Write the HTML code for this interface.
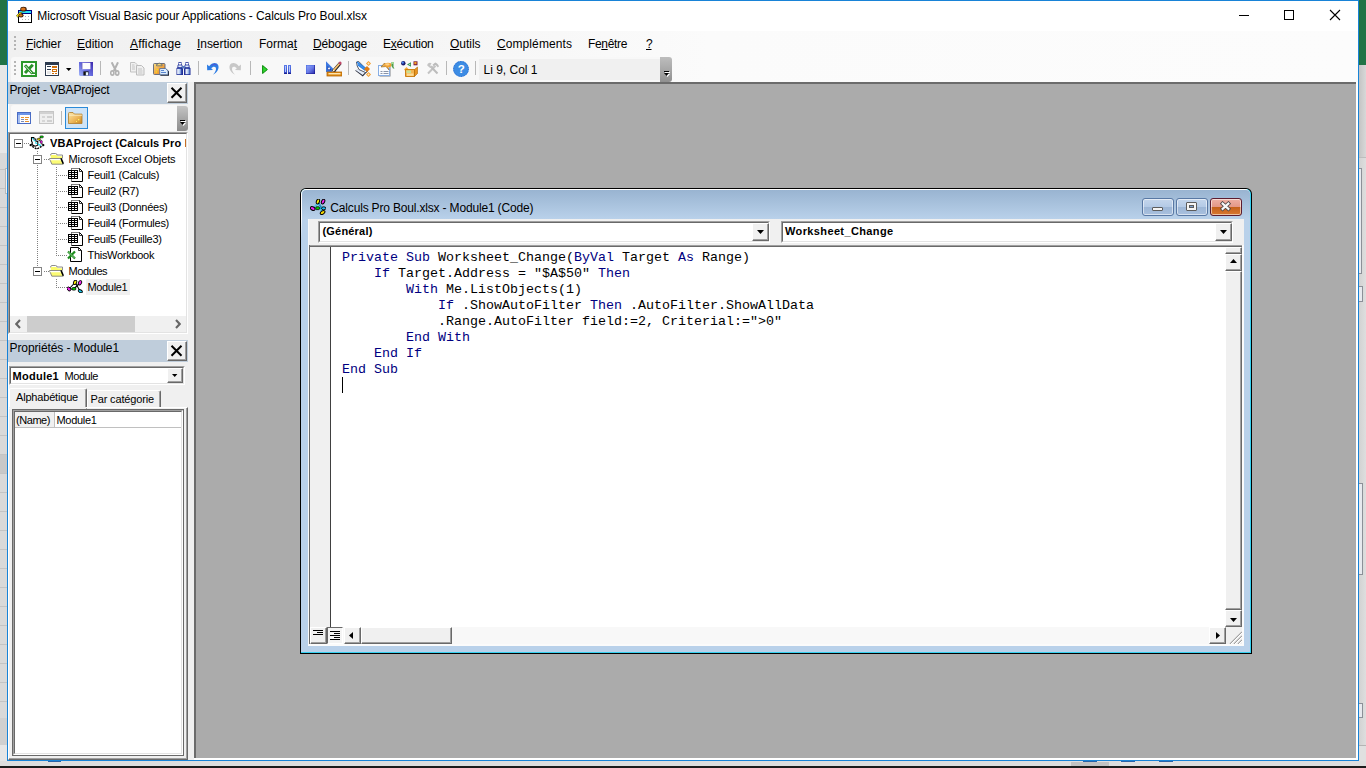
<!DOCTYPE html>
<html lang="fr">
<head>
<meta charset="utf-8">
<title>Microsoft Visual Basic pour Applications - Calculs Pro Boul.xlsx</title>
<style>
html,body{margin:0;padding:0;}
body{width:1366px;height:768px;overflow:hidden;position:relative;background:#e6e6e6;font-family:"Liberation Sans",sans-serif;font-size:12px;color:#000;}
body div,body span,body svg{position:absolute;box-sizing:border-box;}
.t{white-space:nowrap;line-height:16px;height:16px;transform-origin:0 50%;}
.t u{text-decoration:underline;text-underline-offset:1px;text-decoration-thickness:1px;position:static;}
.ui{font-size:12px;}
.th{font-size:11px;}
.b{font-weight:bold;}
/* desktop behind */
#bgL{left:0;top:0;width:7px;height:65px;background:#217346;}
#bgL2{left:0;top:65px;width:7px;height:696px;background:#e7e7e7;}
#bgR{left:1359px;top:0;width:7px;height:65px;background:#217346;}
#bgR2{left:1359px;top:65px;width:7px;height:696px;background:linear-gradient(to right,#c4c4c4,#d8d8d8);}
#bgB{left:0;top:761px;width:1366px;height:5px;background:#dedede;}
#task{left:0;top:766px;width:1366px;height:2px;background:#1c1c1c;}
/* main window */
#win{left:7px;top:0;width:1352px;height:761px;background:#f0f0f0;border:1px solid #1883d7;}
#title{left:8px;top:1px;width:1350px;height:30px;background:#fff;}
#menubar{left:8px;top:31px;width:1350px;height:26px;background:linear-gradient(to right,#f0f0f0 0,#f3f3f3 300px,#fbfbfb 700px,#fcfcfc 100%);}
#toolbar{left:8px;top:57px;width:1350px;height:25px;background:linear-gradient(to right,#f0f0f0 0,#f3f3f3 300px,#fbfbfb 700px,#fcfcfc 100%);}
#tbin{left:11px;top:57px;width:650px;height:25px;background:#f8f8f8;border-radius:3px 0 0 3px;}
#mdi{left:194px;top:82px;width:1162px;height:676px;background:#ababab;border-left:2px solid #6b6b6b;border-top:2px solid #6b6b6b;}
.sep{width:1px;background:#b8b8b8;}
.grip i{position:absolute;left:0;width:2px;height:2px;background:#b4b4b4;}
.btn3d{background:#f0f0f0;border:1px solid;border-color:#fff #696969 #696969 #fff;box-shadow:inset -1px -1px 0 #a0a0a0;}
.hd{height:1px;background:repeating-linear-gradient(to right,#808080 0,#808080 1px,transparent 1px,transparent 2px);}
.vd{width:1px;background:repeating-linear-gradient(to bottom,#808080 0,#808080 1px,transparent 1px,transparent 2px);}
.xb{width:9px;height:9px;background:#fff;border:1px solid #848484;}
.xb i{position:absolute;left:1px;top:3px;width:5px;height:1px;background:#000;}
.mono{font-family:"Liberation Mono",monospace;font-size:13.333px;white-space:pre;color:#000;}
.mono b{font-weight:normal;color:#000080;position:static;}
.cb{width:32px;height:18px;border:1px solid #5878a4;border-radius:3px;background:linear-gradient(#c4d6ec 0,#b4cae6 48%,#9cb6d6 50%,#a8c0de 100%);box-shadow:inset 0 0 0 1px rgba(255,255,255,.55);}
.cbx{border-color:#5c1c30;background:linear-gradient(#eeb0a4 0,#e49888 48%,#c4601c 50%,#d87830 100%);}
.sb{background:#e6e9ee;border:1px solid #8c9098;border-left:0;}
</style>
</head>
<body>
<div id="bgL"></div><div id="bgL2"></div>
<div id="bgR"></div><div id="bgR2"></div>
<div style="left:0;top:153px;width:7px;height:608px;background:repeating-linear-gradient(to bottom,#d9d9d9 0,#d9d9d9 18px,#c4c4c4 18px,#c4c4c4 19px);background-position:0 -2px"></div>
<div style="left:0;top:455px;width:7px;height:18px;background:#c8c8c8"></div>
<div style="left:0;top:718px;width:7px;height:27px;background:#d0d0d0"></div>
<div style="left:0;top:745px;width:7px;height:16px;background:#e6e6e6"></div>
<div style="left:5px;top:168px;width:2px;height:26px;background:#f2f2f2;border:1px solid #b8b8b8;border-right:0"></div>
<div style="left:1359px;top:157px;width:7px;height:1px;background:#bdbdbd"></div>
<div style="left:1359px;top:158px;width:7px;height:587px;background:linear-gradient(to right,#d2d2d2,#dedede)"></div>
<div style="left:1359px;top:745px;width:7px;height:1px;background:#b4b4b4"></div>
<div style="left:1359px;top:746px;width:7px;height:15px;background:#e0e0e0"></div>
<div class="sb" style="left:1359px;top:168px;width:3px;height:106px"></div>
<div class="sb" style="left:1359px;top:286px;width:4px;height:16px"></div>
<div class="sb" style="left:1359px;top:483px;width:4px;height:92px"></div>
<div class="sb" style="left:1359px;top:703px;width:4px;height:15px"></div>
<div id="bgB"></div>
<div style="left:48px;top:761px;width:13px;height:1px;background:#2a64a8"></div>
<div style="left:1083px;top:761px;width:14px;height:1px;background:#2a64a8"></div>
<div style="left:1121px;top:761px;width:14px;height:1px;background:#2a64a8"></div>
<div style="left:1159px;top:761px;width:14px;height:1px;background:#2a64a8"></div>

<div id="task"></div>
<div style="left:1071px;top:762px;width:38px;height:4px;background:#c2c2c2"></div>
<div id="win"></div>
<div id="title"></div>
<div id="menubar"></div>
<div id="toolbar"></div>
<div id="tbin"></div>
<div id="mdi"></div>
<div style="left:1356px;top:82px;width:2px;height:678px;background:#fff"></div>
<div style="left:194px;top:758px;width:1164px;height:2px;background:#fff"></div>
<div style="left:8px;top:104px;width:1px;height:656px;background:#fff"></div>
<svg width="0" height="0" style="left:0;top:0"><defs>
<g id="ifold"><path d="M1.500 2.500q0-2 1.500-2h3.500q1.500 0 1.500 1.500h5.500v3.500" fill="#fff" stroke="#808080" stroke-width=".9"/><path d="M1.800 2h6l.5 1.200h4.700v2h-11.200z" fill="#fbfb6c"/><path d="M.5 5.500h11.300l2.400 5.700h-11.400z" fill="#fbfb74" stroke="#808080" stroke-width=".9"/><path d="M.9 5.900h10.600l.6 1.400h-10.700z" fill="#fff"/><path d="M12 5.300l2.300 5.500" stroke="#000" stroke-width="1.600"/></g>
<g id="isheet"><path d="M3.500 .5h8l3 3v10h-11z" fill="#fff" stroke="#000" stroke-width="1"/><path d="M3.500 13.500v-13h8" fill="none" stroke="#808080" stroke-width="1"/><path d="M11.500 .5v3h3" fill="none" stroke="#000" stroke-width=".8"/><rect x="0" y="2" width="10" height="9" fill="#000"/><g fill="#fff"><rect x="1" y="3" width="2" height="1"/><rect x="4" y="3" width="2" height="1"/><rect x="7" y="3" width="2" height="1"/><rect x="1" y="5" width="2" height="1"/><rect x="4" y="5" width="2" height="1"/><rect x="7" y="5" width="2" height="1"/><rect x="1" y="7" width="2" height="1"/><rect x="4" y="7" width="2" height="1"/><rect x="7" y="7" width="2" height="1"/><rect x="1" y="9" width="2" height="1"/><rect x="4" y="9" width="2" height="1"/><rect x="7" y="9" width="2" height="1"/></g></g>
<g id="imod"><path d="M2 9L8 2.500M8.500 3L13 11M6.800 9L12.800 3M3 9h4" stroke="#000" stroke-width="1.100" fill="none"/><ellipse cx="8.100" cy="2.400" rx="1.500" ry="2.300" transform="rotate(25 8.100 2.400)" fill="#f4ec00" stroke="#000" stroke-width=".9"/><ellipse cx="13" cy="2.800" rx="1.500" ry="2.300" transform="rotate(25 13 2.800)" fill="#f024f0" stroke="#000" stroke-width=".9"/><ellipse cx="1.900" cy="9" rx="1.600" ry="2.200" transform="rotate(-40 1.900 9)" fill="#f024f0" stroke="#000" stroke-width=".9"/><rect x="5" y="7.600" width="3.800" height="2.500" rx=".9" fill="#00d400" stroke="#000" stroke-width=".8"/><ellipse cx="13.300" cy="11.200" rx="2.200" ry="1.400" transform="rotate(30 13.300 11.200)" fill="#20d0f0" stroke="#000" stroke-width=".9"/></g>
<g id="imod16"><path d="M3.500 9L7.500 4.500M9 4.500L12.500 9M8.500 5L12 13M7 9.300h6" stroke="#08c0e0" stroke-width="1.400" stroke-dasharray="1.100 .500" fill="none"/><path d="M9.200 4.200L11.600 10.500" stroke="#1c50a8" stroke-width="1.100" stroke-dasharray="1 .7"/><ellipse cx="7.900" cy="2.500" rx="1.500" ry="2.500" transform="rotate(20 7.900 2.500)" fill="#f4ec00" stroke="#000" stroke-width="1"/><ellipse cx="13.100" cy="2.600" rx="1.500" ry="2.500" transform="rotate(25 13.100 2.600)" fill="#f024f0" stroke="#000" stroke-width="1"/><ellipse cx="2.700" cy="9.500" rx="2.500" ry="1.700" transform="rotate(30 2.700 9.500)" fill="#f024f0" stroke="#000" stroke-width="1"/><rect x="5.800" y="7.800" width="3.600" height="2.800" rx=".7" fill="#00d400" stroke="#000" stroke-width=".8"/><ellipse cx="13.700" cy="9.300" rx="2.200" ry="1.500" fill="#20b8f0" stroke="#000" stroke-width=".9"/><ellipse cx="12.600" cy="13.500" rx="2.600" ry="1.600" transform="rotate(-35 12.600 13.500)" fill="#f4d800" stroke="#000" stroke-width="1"/></g>
</defs></svg>
<svg id="appico" style="left:16px;top:6px" width="18" height="18" viewBox="0 0 18 18" shape-rendering="crispEdges">
<rect x="2.5" y="4.5" width="13" height="12" fill="#fff" stroke="#000"/>
<rect x="2" y="4" width="14" height="4" fill="#000080"/>
<rect x="3" y="5" width="12" height="2" fill="#22e0f0"/>
<g fill="#b0b0b0"><rect x="9" y="10" width="1" height="1"/><rect x="12" y="10" width="1" height="1"/><rect x="6" y="13" width="1" height="1"/><rect x="9" y="13" width="1" height="1"/><rect x="12" y="13" width="1" height="1"/></g>
<g shape-rendering="auto"><ellipse cx="7.5" cy="3.2" rx="3.2" ry="2.4" fill="#3a1c08"/><ellipse cx="7.3" cy="3" rx="2.3" ry="1.6" fill="#d8741c"/>
<path d="M0.300 9.800 L3.800 6.200 L6.300 6.800 L1.800 11.200Z" fill="#fff000" stroke="#222" stroke-width=".5"/>
<ellipse cx="5" cy="9.5" rx="2.6" ry="1.9" fill="#3a1c08"/><ellipse cx="4.8" cy="9.4" rx="1.8" ry="1.1" fill="#d8741c"/></g>
</svg>
<span class="t " style="left:37.3px;top:8px;font-size:12px;letter-spacing:-0.090px;">Microsoft Visual Basic pour Applications - Calculs Pro Boul.xlsx</span>
<div style="left:1239px;top:15px;width:10px;height:1px;background:#000"></div>
<div style="left:1284px;top:10px;width:10px;height:10px;border:1px solid #000"></div>
<svg style="left:1329px;top:9px" width="12" height="12" viewBox="0 0 12 12"><path d="M1 1L11 11M11 1L1 11" stroke="#000" stroke-width="1.1" fill="none"/></svg>

<div class="grip" style="left:14px;top:36px;width:2px;height:16px"><i style="top:0"></i><i style="top:4px"></i><i style="top:8px"></i><i style="top:12px"></i></div>
<span class="t " style="left:26px;top:36px;font-size:12px;letter-spacing:-0.147px;"><u>F</u>ichier</span>
<span class="t " style="left:77px;top:36px;font-size:12px;letter-spacing:-0.029px;"><u>E</u>dition</span>
<span class="t " style="left:130px;top:36px;font-size:12px;letter-spacing:0.130px;"><u>A</u>ffichage</span>
<span class="t " style="left:197px;top:36px;font-size:12px;letter-spacing:-0.061px;"><u>I</u>nsertion</span>
<span class="t " style="left:259px;top:36px;font-size:12px;">Forma<u>t</u></span>
<span class="t " style="left:313px;top:36px;font-size:12px;letter-spacing:-0.174px;"><u>D</u>ébogage</span>
<span class="t " style="left:383px;top:36px;font-size:12px;letter-spacing:-0.247px;">E<u>x</u>écution</span>
<span class="t " style="left:450px;top:36px;font-size:12px;letter-spacing:-0.031px;"><u>O</u>utils</span>
<span class="t " style="left:497px;top:36px;font-size:12px;letter-spacing:0.087px;"><u>C</u>ompléments</span>
<span class="t " style="left:588px;top:36px;font-size:12px;letter-spacing:-0.342px;">Fe<u>n</u>être</span>
<span class="t " style="left:646px;top:36px;font-size:12px;letter-spacing:-1.188px;"><u>?</u></span>

<div class="grip" style="left:14px;top:61px;width:2px;height:16px"><i style="top:0"></i><i style="top:4px"></i><i style="top:8px"></i><i style="top:12px"></i></div>
<!-- excel -->
<svg style="left:21px;top:61px" width="16" height="16" viewBox="0 0 16 16"><rect x="1" y="1" width="14" height="14" fill="#fff" stroke="#2c982c" stroke-width="2"/><path d="M4 4.200L11.500 12.500M11.800 3.800L4 12" stroke="#2a922a" stroke-width="3" fill="none"/><path d="M4.500 5L11.400 12.600" stroke="#fff" stroke-width=".8"/><path d="M11 12.200h3" stroke="#2a922a" stroke-width="1.600"/></svg>
<!-- userform -->
<svg style="left:45px;top:62px" width="14" height="14" viewBox="0 0 14 14" shape-rendering="crispEdges"><rect x=".5" y=".5" width="13" height="13" fill="#fff" stroke="#2c3a4e"/><rect x="0" y="0" width="14" height="3" fill="#2c3a4e"/><rect x="2" y="4" width="4" height="1" fill="#2c3a4e"/><rect x="2" y="7" width="4" height="1" fill="#2c3a4e"/><rect x="2" y="9" width="4" height="3" fill="#e6e6e6"/><rect x="7" y="4" width="5" height="2" fill="#d2700c"/><rect x="7.5" y="7.5" width="4" height="2" fill="#fff" stroke="#d2700c"/><rect x="7" y="11" width="2" height="1" fill="#d2700c"/><rect x="10" y="11" width="2" height="1" fill="#d2700c"/></svg>
<svg style="left:66px;top:68px" width="6" height="4" viewBox="0 0 6 4"><path d="M0 0h5.4L2.7 3z" fill="#000"/></svg>
<!-- save -->
<svg style="left:79px;top:62px" width="14" height="14" viewBox="0 0 14 14"><defs><linearGradient id="gsv" x1="0" y1="1" x2="1" y2="0"><stop offset="0" stop-color="#a4b8fa"/><stop offset=".5" stop-color="#6468dc"/><stop offset="1" stop-color="#3c28ac"/></linearGradient></defs><path d="M0 0h14v14H1L0 13z" fill="url(#gsv)"/><rect x="2.800" y=".8" width="8.600" height="6.400" fill="#fdfdfd"/><path d="M3 1v6" stroke="#2a20a0" stroke-width=".6"/><rect x="4.4" y="9.4" width="5.2" height="4" fill="#111"/><rect x="6.8" y="10.2" width="2.4" height="3.2" fill="#e8f6ff"/></svg>
<div class="sep" style="left:100px;top:61px;height:14px"></div>
<!-- cut (disabled) -->
<svg style="left:110px;top:62px" width="10" height="14" viewBox="0 0 10 14"><path d="M1.7 0.3L6 9M8 0.3L3.8 9" stroke="#b2b2b2" stroke-width="2" fill="none"/><ellipse cx="2.3" cy="11" rx="1.6" ry="2.1" fill="#f4f4f4" stroke="#b2b2b2" stroke-width="1.600"/><ellipse cx="7.2" cy="11" rx="1.6" ry="2.1" fill="#f4f4f4" stroke="#b2b2b2" stroke-width="1.600"/></svg>
<!-- copy (disabled) -->
<svg style="left:130px;top:62px" width="16" height="14" viewBox="0 0 16 14"><path d="M.5 .5h4.5l2 2v7.500h-6.500z" fill="#f0f0f0" stroke="#c2c2c2"/><path d="M6.500 3.500h5l2.500 2.500v7h-7.500z" fill="#f0f0f0" stroke="#bcbcbc"/><path d="M8 7h4M8 9h4.500M8 11h4.500M2 3h2.500M2 5h3M2 7h3" stroke="#c4c4c4" stroke-width="1"/></svg>
<!-- paste -->
<svg style="left:153px;top:62px" width="17" height="14" viewBox="0 0 17 14"><defs><linearGradient id="gpa" x1="0" y1="0" x2="1" y2="1"><stop offset="0" stop-color="#f8e088"/><stop offset=".5" stop-color="#f0a848"/><stop offset="1" stop-color="#dc8420"/></linearGradient></defs><rect x=".5" y="1.5" width="11.500" height="11" rx="1" fill="url(#gpa)" stroke="#5c6478" stroke-width=".9"/><path d="M3.500 3.800h5.600v-1.300l-1.400-.4a1.500 1.500 0 0 0-2.800 0l-1.400.4z" fill="#f0d878" stroke="#5a5e6a" stroke-width=".7"/><rect x="3.600" y="7" width="1.200" height="1.200" fill="#fff000"/><rect x="2.800" y="9.400" width="1.200" height="1.200" fill="#fff000"/><path d="M7.400 7h6l2.600 2.400v4.400h-8.600z" fill="#1c1c20"/><path d="M6.700 6.500h6l2.300 2.300v4h-8.300z" fill="#dcecfc" stroke="#3c5c94" stroke-width=".7"/><path d="M8 8.500h3M8 10.500h5" stroke="#4878c8" stroke-width=".9"/></svg>
<!-- find -->
<svg style="left:176px;top:62px" width="15" height="13" viewBox="0 0 15 13"><defs><linearGradient id="gbi" x1="0" y1="0" x2="1" y2="0"><stop offset="0" stop-color="#fff"/><stop offset=".55" stop-color="#b8d0f4"/><stop offset="1" stop-color="#4868c0"/></linearGradient></defs><path d="M2.500 0h3v2l1 1.500v2.200l.5.500v6.800h-6.500v-6.800l1-1v-1.700l1-1.500z" fill="#1e2e98"/><path d="M9.500 0h3v2l1 1.500v1.700l1 1v6.800h-6.500v-6.800l.5-.5v-2.200l1-1.500z" fill="#1e2e98"/><rect x="6" y="4" width="3" height="2.500" fill="#5878bc"/><rect x="1.200" y="6.800" width="4.300" height="5.400" fill="url(#gbi)"/><rect x="9.500" y="6.800" width="4.300" height="5.400" fill="url(#gbi)"/><rect x="3" y=".8" width="2" height="1.800" fill="#fff"/><rect x="10" y=".8" width="2" height="1.800" fill="#fff"/><rect x="2.300" y="3.400" width="3.400" height="1.800" fill="#e4eefc"/><rect x="9.300" y="3.400" width="3.400" height="1.800" fill="#e4eefc"/></svg>
<div class="sep" style="left:198px;top:61px;height:14px"></div>
<!-- undo -->
<svg style="left:206px;top:62px" width="14" height="13" viewBox="0 0 14 13"><path d="M1 2.400L1.200 8.200L7 8L5.200 6.300C6.500 4.600 8.800 4 9.700 5.600C10.600 7.400 9.600 10 7 12.800C11.500 10.600 13.400 6.400 12.200 3.300C10.800 0 6 0.300 3.200 4.200Z" fill="#2c7ce4"/><path d="M5.500 3.500C7.500 1.800 10 1.800 11 3.500" stroke="#6a3cc8" stroke-width=".8" fill="none" opacity=".8"/></svg>
<!-- redo (disabled) -->
<svg style="left:228px;top:62px" width="14" height="13" viewBox="0 0 14 13"><path d="M13 2.400L12.800 8.200L7 8L8.800 6.300C7.500 4.600 5.200 4 4.300 5.600C3.400 7.400 4.400 10 7 12.800C2.500 10.600 .6 6.400 1.800 3.300C3.200 0 8 0.300 10.800 4.200Z" fill="#c8c8c8"/></svg>
<div class="sep" style="left:250px;top:61px;height:14px"></div>
<!-- run -->
<svg style="left:262px;top:65px" width="6" height="9" viewBox="0 0 6 9"><path d="M.6 .5L5.400 4.500L.6 8.500Z" fill="#2fd42f" stroke="#0a8a0a" stroke-width="1" stroke-linejoin="round"/></svg>
<!-- break -->
<svg style="left:284px;top:65px" width="7" height="9" viewBox="0 0 7 9" shape-rendering="crispEdges"><defs><linearGradient id="gps" x1="0" y1="0" x2="0" y2="1"><stop offset="0" stop-color="#5c7ce8"/><stop offset=".8" stop-color="#3c54d0"/><stop offset="1" stop-color="#10107c"/></linearGradient></defs><rect x="0" y="0" width="3" height="9" fill="url(#gps)"/><rect x="4" y="0" width="3" height="9" fill="url(#gps)"/><rect x="1" y="1" width="1" height="6" fill="#b4c8fc"/><rect x="5" y="1" width="1" height="6" fill="#b4c8fc"/></svg>
<!-- reset -->
<svg style="left:306px;top:65px" width="9" height="9" viewBox="0 0 9 9"><defs><linearGradient id="gst" x1="0" y1="0" x2="1" y2="1"><stop offset="0" stop-color="#90a8f8"/><stop offset=".5" stop-color="#6a7ce8"/><stop offset="1" stop-color="#2424a8"/></linearGradient></defs><rect width="9" height="9" fill="url(#gst)"/><path d="M0 0h9M0 0v9" stroke="#4a6ae0" stroke-width="1.200"/><path d="M9 0v9h-9" stroke="#1a1a90" stroke-width="1.200" fill="none"/></svg>
<!-- design mode -->
<svg style="left:326px;top:61px" width="16" height="16" viewBox="0 0 16 16"><path d="M0 .3L0 11h10.500Z" fill="#3c78e0"/><path d="M1.600 5L1.600 9.300h4.200Z" fill="#1e3ca0"/><circle cx="3" cy="7.600" r="1" fill="#fff"/><path d="M7 10.600L14.200 2.300" stroke="#202020" stroke-width="3.200"/><path d="M7.200 9.800L13.600 2.500" stroke="#f4c070" stroke-width="1.800"/><path d="M13.300 3L15 1.200" stroke="#c04868" stroke-width="2.600"/><path d="M6 11l1.600-2.300l.9 1z" fill="#fff"/><rect x="1" y="11" width="15" height="4" fill="#e08c14" stroke="#b46404" stroke-width=".8"/><rect x="2.500" y="12" width="12" height="1.400" fill="#fce4b0"/></svg>
<div class="sep" style="left:348px;top:61px;height:14px"></div>
<!-- project explorer -->
<svg style="left:355px;top:61px" width="17" height="16" viewBox="0 0 17 16"><path d="M0 9.500L7.500 7l5 3.500L7.800 15.500Z" fill="#2a2e3c"/><path d="M.5 9L7.500 6.500l4.500 3.200L7.600 14Z" fill="#e4ecf8"/><path d="M1.500 1L3.600 .4L13 9.800L10.500 11.500L4 8.600L2.200 5Z" fill="#fff" stroke="#2a2e3c" stroke-width=".8"/><path d="M2 1.200L12.500 8.800M2.600 3.600L10.500 9.400" stroke="#2c84e8" stroke-width="1.500"/><path d="M13.500 0l2.500 2.500l-2.500 2.500l-2.500-2.500z" fill="#f49c2c"/><path d="M12 5l3 3l-3 3l-3-3z" fill="#e07c14"/><path d="M13.500 11l2.500 2.500l-2.500 2.500l-2.500-2.500z" fill="#f49c2c"/><path d="M13.500 1.300l1.200 1.200l-1.200 1.200l-1.200-1.200z" fill="#fde8c0"/><path d="M13.500 12.300l1.200 1.200l-1.200 1.200l-1.200-1.200z" fill="#fde8c0"/></svg>
<!-- properties window -->
<svg style="left:378px;top:61px" width="17" height="16" viewBox="0 0 17 16"><rect x="1.500" y="5.500" width="11" height="10" fill="#1e2430" opacity=".55"/><rect x=".5" y="4.500" width="11" height="10" fill="#fafcff" stroke="#88aee4"/><path d="M2.500 10.500h2M5.500 10.500h5M2.500 12.500h2M5.500 12.500h5" stroke="#8a94a8" stroke-width="1.100"/><path d="M3 6L6.500 2L10 6.500L11 9L8 5.500Z" fill="#e8b054" stroke="#8c5c18" stroke-width=".6"/><ellipse cx="10" cy="4" rx="3.600" ry="2.300" fill="#f0a030"/><ellipse cx="9.400" cy="3.400" rx="2.200" ry="1.100" fill="#fcd088"/><path d="M13.500 1h2v5l1 1.500h-1.500l-1.500-2.500z" fill="#4c9c4c"/><rect x="14" y="1" width="1.500" height="2" fill="#9cdc8c"/></svg>
<!-- object browser -->
<svg style="left:401px;top:61px" width="17" height="16" viewBox="0 0 17 16"><circle cx="2.300" cy="2.300" r="2.200" fill="#1c1c70"/><circle cx="1.800" cy="1.700" r="1.100" fill="#4c8cf0"/><path d="M10 1.200v4.600L6 3.500Z" fill="#2c8c4c"/><path d="M9.300 2.500v2L7.600 3.500Z" fill="#b8e8c0"/><rect x="12.500" y=".3" width="4" height="4" fill="#7c1c3c"/><rect x="13.300" y="1" width="2.200" height="2.200" fill="#f4a020"/><path d="M3 8.500L5.500 6L8 8.500L5.500 11Z" fill="#f8b040"/><path d="M4.500 8.500h9v7h-9z" fill="#f4b450" stroke="#c87808" stroke-width=".9"/><path d="M13.500 8.500L16.500 6v6.500l-3 3z" fill="#e89420" stroke="#b06804" stroke-width=".6"/><path d="M5.500 9.500h4.500v2.500h-4.500z" fill="#c8e094"/><path d="M6 12.500h6.500v2.300h-6.500z" fill="#fcdc98"/></svg>
<!-- toolbox (disabled) -->
<svg style="left:426px;top:62px" width="14" height="13" viewBox="0 0 14 13"><path d="M2 11.500L9.500 3.800" stroke="#c4c4c4" stroke-width="2"/><path d="M11.500 11.500L4.500 4.300" stroke="#bcbcbc" stroke-width="2"/><path d="M1.200 3.500a2.600 2.600 0 0 1 4.400-1.900l-1.300 1.300l.4 1.400l1.400.3l1.200-1.200a2.600 2.600 0 0 1-3.200 2.600z" fill="#c4c4c4"/><path d="M6.500 2.800L9.200 .6c1.600.6 2.800 1.700 3.800 3.600l-1.300 1.200c-.7-1.200-1.500-2-2.700-2.400l-1.200 1.200z" fill="#bcbcbc"/></svg>
<div class="sep" style="left:446px;top:61px;height:14px"></div>
<!-- help -->
<svg style="left:453px;top:61px" width="16" height="16" viewBox="0 0 16 16"><circle cx="8" cy="8" r="7.900" fill="#3c8ce4"/><circle cx="8" cy="8" r="7.400" fill="none" stroke="#2c64c8" stroke-width=".9" stroke-dasharray="1 1.600"/><text x="8.200" y="12.300" text-anchor="middle" font-family="Liberation Sans,sans-serif" font-weight="bold" font-size="11.500" fill="#fff">?</text></svg>
<div class="sep" style="left:475px;top:61px;height:14px"></div>
<div style="left:479px;top:59px;width:181px;height:21px;background:#f0f0f0"></div>
<span class="t " style="left:483.5px;top:62px;font-size:12px;">Li 9, Col 1</span>
<div style="left:660px;top:57px;width:12px;height:25px;border-radius:0 3px 3px 0;background:linear-gradient(#bdbdbd,#a8a8a8 50%,#8f8f8f)"></div>
<svg style="left:663px;top:71px" width="8" height="8" viewBox="0 0 8 8" shape-rendering="crispEdges"><rect x="2" y="1" width="5" height="1" fill="#fff"/><path d="M2 3h5L4.500 6z" fill="#fff" shape-rendering="auto"/><rect x="1" y="0" width="5" height="1" fill="#000"/><path d="M1 2h5L3.500 5z" fill="#000" shape-rendering="auto"/></svg>

<div style="left:8px;top:82px;width:180px;height:22px;background:#bfcddb"></div>
<span class="t " style="left:9.5px;top:82px;font-size:12px;letter-spacing:-0.178px;">Projet - VBAProject</span>
<div class="btn3d" style="left:167px;top:83px;width:20px;height:20px"></div>
<svg style="left:170px;top:86px" width="14" height="14" viewBox="0 0 14 14"><path d="M1.500 1.800L11.500 11.800M11.500 1.800L1.500 11.800" stroke="#000" stroke-width="2" fill="none"/></svg>
<div style="left:11px;top:105px;width:166px;height:26px;background:#f9f9f9;border-radius:3px 0 0 3px"></div>
<!-- view code -->
<svg style="left:17px;top:112px" width="14" height="12" viewBox="0 0 14 12" shape-rendering="crispEdges"><rect x=".5" y=".5" width="13" height="11" fill="#fdfdff" stroke="#4a6cc4"/><rect x="1" y="1" width="12" height="2" fill="#6c94e8"/><rect x="1" y="3" width="2" height="8" fill="#a8c0f0"/><rect x="4" y="5" width="3" height="1" fill="#e8922c"/><rect x="8" y="5" width="4" height="1" fill="#e8922c"/><rect x="4" y="7" width="3" height="1" fill="#7c8cb4"/><rect x="8" y="7" width="3" height="1" fill="#e8922c"/><rect x="4" y="9" width="3" height="1" fill="#7c8cb4"/><rect x="8" y="9" width="4" height="1" fill="#e8922c"/></svg>
<!-- view object (disabled) -->
<svg style="left:39px;top:111px" width="15" height="13" viewBox="0 0 15 13" shape-rendering="crispEdges"><rect x=".5" y=".5" width="14" height="12" fill="#efefef" stroke="#c6c6c6"/><rect x="1" y="1" width="13" height="2" fill="#d2d2d2"/><rect x="3" y="5" width="3" height="2" fill="#d6d6d6"/><rect x="8" y="5" width="5" height="2" fill="#d0d0d0"/><rect x="3" y="9" width="3" height="2" fill="#d6d6d6"/><rect x="8" y="9" width="5" height="2" fill="#d0d0d0"/></svg>
<div class="sep" style="left:61px;top:111px;height:14px"></div>
<div style="left:65px;top:107px;width:23px;height:22px;background:#cfe4f7;border:1px solid #2b8ad8"></div>
<!-- toggle folders -->
<svg style="left:68px;top:112px" width="15" height="12" viewBox="0 0 15 12"><defs><linearGradient id="gfo" x1="0" y1="0" x2="1" y2="1"><stop offset="0" stop-color="#fbe6a8"/><stop offset=".55" stop-color="#eeb85c"/><stop offset="1" stop-color="#c88420"/></linearGradient></defs><path d="M.5 1.500q0-1 1-1h3.500l1.500 1.600h7.500v9.400h-13.500z" fill="url(#gfo)" stroke="#b07c28" stroke-width=".8"/><path d="M1 3.200h13" stroke="#fdf2d0" stroke-width=".8"/><rect x="10" y="7" width="1.300" height="1.300" fill="#fff35c"/><rect x="8" y="9" width="1" height="1" fill="#fff35c"/></svg>
<div style="left:177px;top:106px;width:11px;height:25px;border-radius:0 3px 3px 0;background:linear-gradient(#c4c4c4,#a8a8a8 50%,#8c8c8c)"></div>
<svg style="left:179px;top:120px" width="8" height="8" viewBox="0 0 8 8" shape-rendering="crispEdges"><rect x="2" y="1" width="5" height="1" fill="#fff"/><path d="M2 3h5L4.500 6z" fill="#fff" shape-rendering="auto"/><rect x="1" y="0" width="5" height="1" fill="#000"/><path d="M1 2h5L3.500 5z" fill="#000" shape-rendering="auto"/></svg>
<!-- tree -->
<div id="tree" style="left:8px;top:132px;width:180px;height:202px;background:#fff;border:1px solid;border-color:#a0a0a0 #fff #fff #a0a0a0"></div>
<div style="left:9px;top:133px;width:178px;height:200px;border:1px solid;border-color:#696969 #e3e3e3 #e3e3e3 #696969"></div>
<!-- dotted lines -->
<div class="hd" style="left:24px;top:143px;width:5px"></div>
<div class="vd" style="left:37px;top:151px;height:4px"></div>
<div class="vd" style="left:37px;top:165px;height:102px"></div>
<div class="hd" style="left:44px;top:159px;width:5px"></div>
<div class="vd" style="left:56px;top:167px;height:89px"></div>
<div class="hd" style="left:58px;top:175px;width:9px"></div>
<div class="hd" style="left:58px;top:191px;width:9px"></div>
<div class="hd" style="left:58px;top:207px;width:9px"></div>
<div class="hd" style="left:58px;top:223px;width:9px"></div>
<div class="hd" style="left:58px;top:239px;width:9px"></div>
<div class="hd" style="left:58px;top:255px;width:9px"></div>
<div class="hd" style="left:44px;top:271px;width:5px"></div>
<div class="vd" style="left:56px;top:279px;height:9px"></div>
<div class="hd" style="left:58px;top:287px;width:9px"></div>
<!-- expand boxes -->
<div class="xb" style="left:14px;top:139px"><i></i></div>
<div class="xb" style="left:33px;top:155px"><i></i></div>
<div class="xb" style="left:33px;top:267px"><i></i></div>
<!-- VBAProject icon -->
<svg style="left:29px;top:135px" width="16" height="15" viewBox="0 0 16 15"><path d="M.8 9.800L7.800 14L15.200 10" fill="none" stroke="#000" stroke-width="1.400" stroke-dasharray="2 .9"/><path d="M3 9l-2.200.9M12.500 8.800l2.700 1.200" stroke="#000" stroke-width="1.100"/><path d="M2.500 2.500h2.300v1.500h2v2l2 .5v3.700l-2.600 1l-3-1.400v-2.600l-.7-1z" fill="#fff" stroke="#000" stroke-width="1.100"/><path d="M3.200 3.600h1.300M4.600 5.500h1.700M6 7.600l2 .9M9 9.200l3 1.400" stroke="#20d8f0" stroke-width="1.300"/><path d="M9.500 4.200l2.800-2.400M10 4.500l2 3" stroke="#000" stroke-width=".8"/><rect x="11" y=".9" width="3.300" height="1.900" rx=".7" fill="#00e000" stroke="#000" stroke-width=".6"/><rect x="8.400" y="3.300" width="3" height="1.800" rx=".7" fill="#fff000" stroke="#000" stroke-width=".6"/><rect x="11.300" y="5.400" width="1.900" height="3" rx=".8" fill="#ff20ff" stroke="#000" stroke-width=".6"/></svg>
<!-- folder icons -->
<svg class="fold" style="left:49px;top:153px" width="15" height="12" viewBox="0 0 15 12"><use href="#ifold"/></svg>
<svg class="fold" style="left:49px;top:265px" width="15" height="12" viewBox="0 0 15 12"><use href="#ifold"/></svg>
<!-- sheet icons -->
<svg style="left:68px;top:168px" width="16" height="14" viewBox="0 0 16 14"><use href="#isheet"/></svg>
<svg style="left:68px;top:184px" width="16" height="14" viewBox="0 0 16 14"><use href="#isheet"/></svg>
<svg style="left:68px;top:200px" width="16" height="14" viewBox="0 0 16 14"><use href="#isheet"/></svg>
<svg style="left:68px;top:216px" width="16" height="14" viewBox="0 0 16 14"><use href="#isheet"/></svg>
<svg style="left:68px;top:232px" width="16" height="14" viewBox="0 0 16 14"><use href="#isheet"/></svg>
<!-- ThisWorkbook -->
<svg style="left:67px;top:247px" width="16" height="15" viewBox="0 0 16 15"><path d="M3.500 .5h8l3 3v11h-11z" fill="#fff" stroke="#000"/><path d="M11.500 .5v3h3" fill="none" stroke="#000" stroke-width=".8"/><path d="M1 4.500l7 7M8 4.500l-7 7" stroke="#1c8c1c" stroke-width="2.200"/><path d="M1.500 5l6 6" stroke="#fff" stroke-width=".5"/></svg>
<!-- Module1 -->
<div style="left:86px;top:279px;width:44px;height:16px;background:#f0f0f0"></div>
<svg style="left:67px;top:280px" width="16" height="13" viewBox="0 0 16 13"><use href="#imod"/></svg>
<div style="left:50px;top:135px;width:136px;height:16px;overflow:hidden"><span class="t th b" style="left:0px;top:0px;font-size:11px;letter-spacing:0.159px;">VBAProject (Calculs Pro Boul.xlsx)</span></div>
<span class="t th" style="left:68.5px;top:151px;font-size:11px;letter-spacing:-0.110px;">Microsoft Excel Objets</span>
<span class="t th" style="left:87.5px;top:167px;font-size:11px;letter-spacing:-0.295px;">Feuil1 (Calculs)</span>
<span class="t th" style="left:87.5px;top:183px;font-size:11px;letter-spacing:-0.282px;">Feuil2 (R7)</span>
<span class="t th" style="left:87.5px;top:199px;font-size:11px;letter-spacing:-0.273px;">Feuil3 (Données)</span>
<span class="t th" style="left:87.5px;top:215px;font-size:11px;letter-spacing:-0.276px;">Feuil4 (Formules)</span>
<span class="t th" style="left:87.5px;top:231px;font-size:11px;letter-spacing:-0.275px;">Feuil5 (Feuille3)</span>
<span class="t th" style="left:87.5px;top:247px;font-size:11px;letter-spacing:-0.292px;">ThisWorkbook</span>
<span class="t th" style="left:68.5px;top:263px;font-size:11px;letter-spacing:-0.411px;">Modules</span>
<span class="t th" style="left:87.5px;top:279px;font-size:11px;letter-spacing:-0.343px;">Module1</span>
<!-- h scrollbar -->
<div style="left:10px;top:316px;width:176px;height:16px;background:#f0f0f0"></div>
<div style="left:27px;top:316px;width:108px;height:16px;background:#cdcdcd"></div>
<svg style="left:15px;top:319px" width="6" height="10" viewBox="0 0 6 10"><path d="M5 1L1.300 5L5 9" stroke="#666" stroke-width="2.100" fill="none"/></svg>
<svg style="left:175px;top:319px" width="6" height="10" viewBox="0 0 6 10"><path d="M1 1L4.700 5L1 9" stroke="#666" stroke-width="2.100" fill="none"/></svg>

<div style="left:8px;top:340px;width:180px;height:22px;background:#bfcddb"></div>
<span class="t " style="left:9.5px;top:340px;font-size:12px;letter-spacing:-0.095px;">Propriétés - Module1</span>
<div class="btn3d" style="left:167px;top:341px;width:20px;height:20px"></div>
<svg style="left:170px;top:344px" width="14" height="14" viewBox="0 0 14 14"><path d="M1.500 1.800L11.500 11.800M11.500 1.800L1.500 11.800" stroke="#000" stroke-width="2" fill="none"/></svg>
<!-- combo -->
<div style="left:9px;top:366px;width:176px;height:19px;background:#fff;border:1px solid;border-color:#a0a0a0 #fff #fff #a0a0a0"></div>
<div style="left:10px;top:367px;width:174px;height:17px;border:1px solid;border-color:#696969 #e3e3e3 #e3e3e3 #696969"></div>
<div class="btn3d" style="left:167px;top:368px;width:16px;height:15px"></div>
<svg style="left:172px;top:374px" width="6" height="4" viewBox="0 0 6 4"><path d="M0 0h5.400L2.700 3z" fill="#000"/></svg>
<span class="t th b" style="left:12.5px;top:368px;font-size:11px;letter-spacing:0.268px;">Module1</span>
<span class="t th" style="left:64.5px;top:368px;font-size:11px;letter-spacing:-0.430px;">Module</span>
<!-- tabs -->
<div style="left:9px;top:388px;width:78px;height:21px;background:#f0f0f0;border:1px solid;border-color:#fff #696969 transparent #fff;border-radius:2px 2px 0 0;box-shadow:inset -1px 0 0 #a0a0a0"></div>
<div style="left:87px;top:390px;width:74px;height:18px;background:#f0f0f0;border:1px solid;border-color:#fff #696969 transparent #fff;border-radius:2px 2px 0 0;box-shadow:inset -1px 0 0 #a0a0a0"></div>
<span class="t th" style="left:16px;top:389px;font-size:11px;letter-spacing:-0.186px;">Alphabétique</span>
<span class="t th" style="left:90.5px;top:391px;font-size:11px;letter-spacing:-0.149px;">Par catégorie</span>
<!-- page frame -->
<div style="left:8px;top:407px;width:180px;height:353px;border:1px solid;border-color:#fff #696969 #696969 #fff;box-shadow:inset -1px -1px 0 #a0a0a0"></div>
<div style="left:9px;top:407px;width:77px;height:1px;background:#f0f0f0"></div>
<!-- list -->
<div style="left:12px;top:409px;width:172px;height:347px;background:#fff;border:1px solid #696969"></div>
<div style="left:13px;top:410px;width:170px;height:345px;border:1px solid;border-color:#a0a0a0 #fff #fff #a0a0a0"></div>
<div style="left:14px;top:411px;width:168px;height:343px;border:1px solid;border-color:#696969 #e3e3e3 #e3e3e3 #696969"></div>
<div style="left:15px;top:412px;width:39px;height:15px;background:#f0f0f0"></div>
<div style="left:54px;top:412px;width:1px;height:15px;background:#c0c0c0"></div>
<div style="left:15px;top:427px;width:166px;height:1px;background:#c0c0c0"></div>
<span class="t th" style="left:16px;top:412px;font-size:11px;letter-spacing:-0.445px;">(Name)</span>
<span class="t th" style="left:56.5px;top:412px;font-size:11px;letter-spacing:-0.315px;">Module1</span>

<!-- code window frame -->
<div style="left:300px;top:188px;width:952px;height:466px;background:#000;border-radius:6px 6px 0 0"></div>
<div style="left:301px;top:189px;width:950px;height:464px;background:#35d0f0;border-radius:5px 5px 0 0"></div>
<div style="left:301px;top:189px;width:949px;height:463px;background:linear-gradient(#fff 0,#fff 28px,#b9d1ea 50px,#b9d1ea 100%);border-radius:5px 5px 0 0"></div>
<div style="left:302px;top:190px;width:948px;height:462px;background:linear-gradient(#99b4d1 0,#b9d1ea 29px,#b9d1ea 100%);border-radius:4px 4px 0 0"></div>
<svg style="left:310px;top:199px" width="16" height="16" viewBox="0 0 16 16"><use href="#imod16"/></svg>
<span class="t " style="left:330.3px;top:200px;font-size:12px;letter-spacing:-0.169px;">Calculs Pro Boul.xlsx - Module1 (Code)</span>
<!-- caption buttons -->
<div class="cb" style="left:1142px;top:198px"></div>
<div class="cb" style="left:1176px;top:198px"></div>
<div class="cb cbx" style="left:1210px;top:198px"></div>
<div style="left:1152px;top:207px;width:11px;height:4px;background:#f4f4f4;border:1px solid #5c5c5c;border-radius:1px"></div>
<div style="left:1186px;top:202px;width:11px;height:9px;background:#f4f4f4;border:1px solid #5c5c5c;border-radius:1px"></div>
<div style="left:1189px;top:205px;width:5px;height:3px;background:#7ea0d0;border:1px solid #5c5c5c"></div>
<svg style="left:1219px;top:201px" width="13" height="11" viewBox="0 0 13 11"><path d="M3.600 2.600L9.400 7.900M9.400 2.600L3.600 7.900" stroke="#4a4444" stroke-width="3.800" fill="none" stroke-linecap="square"/><path d="M3.600 2.600L9.400 7.900M9.400 2.600L3.600 7.900" stroke="#f8f8f8" stroke-width="2.100" fill="none" stroke-linecap="square"/></svg>
<!-- client -->
<div style="left:308px;top:219px;width:936px;height:427px;background:#f0f0f0"></div>
<div style="left:308px;top:219px;width:1px;height:427px;background:#f8f8f8"></div>
<div style="left:308px;top:644px;width:936px;height:2px;background:#fbfbfb"></div>
<div style="left:1242px;top:245px;width:2px;height:401px;background:#fbfbfb"></div>
<!-- combos -->
<div style="left:318px;top:221px;width:452px;height:22px;background:#fff;border:1px solid;border-color:#a0a0a0 #fff #fff #a0a0a0"></div>
<div style="left:319px;top:222px;width:450px;height:20px;border:1px solid;border-color:#696969 #e3e3e3 #e3e3e3 #696969"></div>
<div class="btn3d" style="left:752px;top:223px;width:17px;height:18px"></div>
<svg style="left:757px;top:230px" width="8" height="5" viewBox="0 0 8 5"><path d="M0 0h7L3.500 4z" fill="#000"/></svg>
<span class="t b" style="left:322.5px;top:223px;font-size:11px;letter-spacing:0.189px;">(Général)</span>
<div style="left:781px;top:221px;width:452px;height:22px;background:#fff;border:1px solid;border-color:#a0a0a0 #fff #fff #a0a0a0"></div>
<div style="left:782px;top:222px;width:450px;height:20px;border:1px solid;border-color:#696969 #e3e3e3 #e3e3e3 #696969"></div>
<div class="btn3d" style="left:1215px;top:223px;width:17px;height:18px"></div>
<svg style="left:1220px;top:230px" width="8" height="5" viewBox="0 0 8 5"><path d="M0 0h7L3.500 4z" fill="#000"/></svg>
<span class="t b" style="left:785px;top:223px;font-size:11px;letter-spacing:0.375px;">Worksheet_Change</span>
<!-- code pane -->
<div style="left:309px;top:245px;width:933px;height:1px;background:#a0a0a0"></div>
<div style="left:309px;top:246px;width:933px;height:1px;background:#696969"></div>
<div style="left:309px;top:245px;width:1px;height:399px;background:#696969"></div>
<div style="left:310px;top:247px;width:20px;height:380px;background:#f0f0f0"></div>
<div style="left:330px;top:247px;width:1px;height:380px;background:#404040"></div>
<div style="left:331px;top:247px;width:894px;height:380px;background:#fff"></div>
<div id="code" style="left:342px;top:250px;width:880px;height:150px">
<span class="t mono" style="left:0;top:0"><b>Private Sub</b> Worksheet_Change(<b>ByVal</b> Target <b>As</b> Range)</span>
<span class="t mono" style="left:0;top:16px">    <b>If</b> Target.Address = "$A$50" <b>Then</b></span>
<span class="t mono" style="left:0;top:32px">        <b>With</b> Me.ListObjects(1)</span>
<span class="t mono" style="left:0;top:48px">            <b>If</b> .ShowAutoFilter <b>Then</b> .AutoFilter.ShowAllData</span>
<span class="t mono" style="left:0;top:64px">            .Range.AutoFilter field:=2, Criterial:="&gt;0"</span>
<span class="t mono" style="left:0;top:80px">        <b>End With</b></span>
<span class="t mono" style="left:0;top:96px">    <b>End If</b></span>
<span class="t mono" style="left:0;top:112px"><b>End Sub</b></span>
</div>
<div style="left:342px;top:377px;width:1px;height:16px;background:#000"></div>
<!-- v scrollbar -->
<div style="left:1225px;top:247px;width:17px;height:380px;background:#f8f8f8"></div>
<div class="btn3d" style="left:1225px;top:247px;width:17px;height:7px"></div>
<div class="btn3d" style="left:1225px;top:254px;width:17px;height:17px"></div>
<svg style="left:1230px;top:259px" width="8" height="5" viewBox="0 0 8 5"><path d="M0 4h7L3.500 0z" fill="#000"/></svg>
<div class="btn3d" style="left:1225px;top:271px;width:17px;height:339px"></div>
<div class="btn3d" style="left:1225px;top:610px;width:17px;height:17px"></div>
<svg style="left:1230px;top:618px" width="8" height="5" viewBox="0 0 8 5"><path d="M0 0h7L3.500 4z" fill="#000"/></svg>
<!-- bottom bar -->
<div style="left:310px;top:627px;width:932px;height:17px;background:#f8f8f8"></div>
<div class="btn3d" style="left:310px;top:627px;width:17px;height:17px"></div>
<svg style="left:313px;top:630px" width="11" height="6" viewBox="0 0 11 6" shape-rendering="crispEdges"><rect x="0" y="0" width="10" height="1" fill="#000"/><rect x="4" y="2" width="6" height="1" fill="#000"/><rect x="0" y="4" width="10" height="1" fill="#000"/></svg>
<div style="left:327px;top:627px;width:16px;height:17px;background:#f4f4f4;border:1px solid;border-color:#696969 #fff #fff #696969"></div>
<svg style="left:330px;top:631px" width="11" height="10" viewBox="0 0 11 10" shape-rendering="crispEdges"><rect x="0" y="0" width="10" height="1" fill="#000"/><rect x="4" y="2" width="6" height="1" fill="#000"/><rect x="0" y="4" width="10" height="1" fill="#000"/><rect x="4" y="6" width="6" height="1" fill="#000"/><rect x="0" y="8" width="10" height="1" fill="#000"/></svg>
<div class="btn3d" style="left:344px;top:627px;width:17px;height:17px"></div>
<svg style="left:349px;top:632px" width="5" height="8" viewBox="0 0 5 8"><path d="M4 0v7L0 3.500z" fill="#000"/></svg>
<div class="btn3d" style="left:361px;top:627px;width:91px;height:17px"></div>
<div class="btn3d" style="left:1209px;top:627px;width:17px;height:17px"></div>
<svg style="left:1216px;top:632px" width="5" height="8" viewBox="0 0 5 8"><path d="M0 0v7L4 3.500z" fill="#000"/></svg>
<div style="left:1226px;top:627px;width:16px;height:17px;background:#f0f0f0"></div>
<svg style="left:1229px;top:631px" width="13" height="13" viewBox="0 0 13 13"><path d="M1 13L13 1M5 13L13 5M9 13L13 9" stroke="#a0a0a0" stroke-width="1.100"/><path d="M2 13L13 2M6 13L13 6M10 13L13 10" stroke="#fff" stroke-width="1"/></svg>

</body>
</html>
